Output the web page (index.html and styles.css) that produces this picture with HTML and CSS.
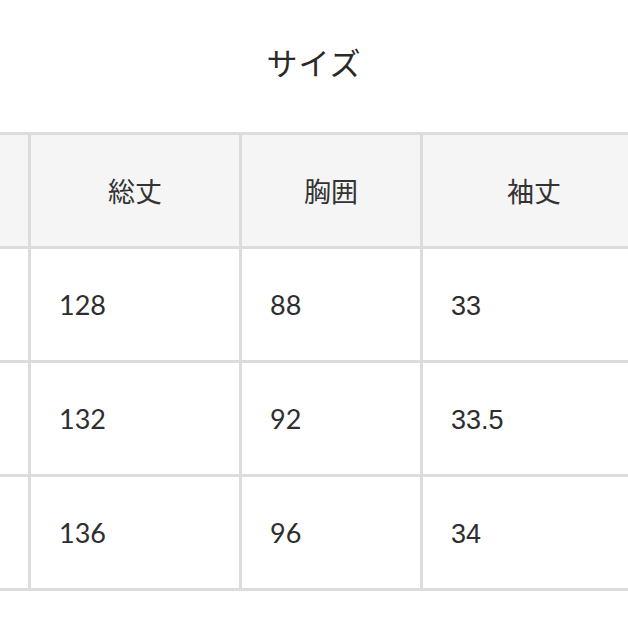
FILE: index.html
```html
<!DOCTYPE html>
<html lang="ja">
<head>
<meta charset="utf-8">
<link rel="stylesheet" href="styles.css">
</head>
<body>
<div class="page">
  <h1 class="title">サイズ</h1>
  <div class="clip">
    <div class="table">
      <div class="cell head"></div>
      <div class="cell head">総丈</div>
      <div class="cell head">胸囲</div>
      <div class="cell head">袖丈</div>

      <div class="cell"></div>
      <div class="cell num">128</div>
      <div class="cell num">88</div>
      <div class="cell num alt">33</div>

      <div class="cell"></div>
      <div class="cell num">132</div>
      <div class="cell num">92</div>
      <div class="cell num alt">33.5</div>

      <div class="cell"></div>
      <div class="cell num">136</div>
      <div class="cell num">96</div>
      <div class="cell num alt">34</div>
    </div>
  </div>
</div>
</body>
</html>
```

FILE: styles.css
```css
html, body {
  margin: 0;
  padding: 0;
  background: #ffffff;
  overflow: hidden;
}
.page {
  width: 628px;
  height: 628px;
  overflow: hidden;
  font-family: "Lato", "Noto Sans CJK JP", sans-serif;
  color: #333333;
}
.title {
  margin: 0;
  height: 132px;
  box-sizing: border-box;
  padding-top: 40px;
  line-height: 44px;
  font-size: 31px;
  font-weight: 400;
  text-align: center;
  font-family: "Noto Sans CJK JP", sans-serif;
  color: #2a2a2a;
  letter-spacing: 1px;
}
.clip {
  overflow: hidden;
  width: 628px;
}
.table {
  display: grid;
  grid-template-columns: 160px 208px 178px 222px;
  grid-auto-rows: 111px;
  gap: 3px;
  padding: 3px;
  background: #dcdcdc;
  margin-left: -135px;
  width: max-content;
}
.cell {
  background: #ffffff;
  display: flex;
  align-items: center;
}
.head {
  background: #f5f5f5;
  justify-content: center;
  font-family: "Noto Sans CJK JP", sans-serif;
  font-size: 27px;
  color: #333333;
}
.num {
  padding-left: 28px;
  font-size: 27px;
  color: #2e2e2e;
}
.alt {
  font-family: "Liberation Sans", "Noto Sans", sans-serif;
  font-size: 27px;
  padding-top: 3px;
}
```
